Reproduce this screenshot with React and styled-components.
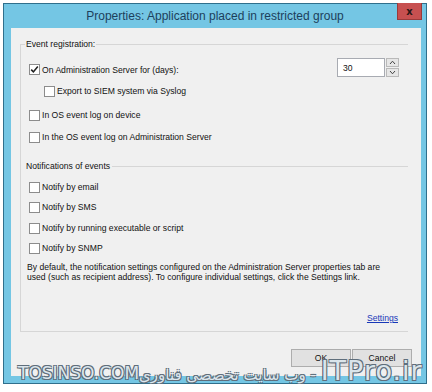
import React from "react";
import styled, { createGlobalStyle } from "styled-components";

const Global = createGlobalStyle`
  html, body { margin: 0; padding: 0; background: #ffffff; }
  body { font-family: "Liberation Sans", Arial, sans-serif; }
`;

const Window = styled.div`
  position: relative;
  margin: 3px 0 0 3px;
  width: 424px;
  height: 381px;
  box-sizing: border-box;
  border: 1px solid #2f6f8c;
  background: #74c6e4;
  display: flex;
  flex-direction: column;
  padding: 0 5px 7px 7px;
`;

const TitleBar = styled.div`
  height: 24px;
  flex: none;
  display: flex;
  align-items: center;
  justify-content: center;
  margin-left: -7px;
  margin-right: -5px;
  font-family: "Liberation Sans", Arial, sans-serif;
  font-size: 12px;
  color: #1d3f5c;
`;

const CloseButton = styled.div`
  position: absolute;
  top: -1px;
  right: 4px;
  width: 25px;
  height: 17px;
  box-sizing: border-box;
  background: #c75050;
  border: 1px solid #9a3a3a;
  border-top: none;
  display: flex;
  align-items: center;
  justify-content: center;
  font-family: "DejaVu Sans", sans-serif;
  font-weight: bold;
  font-size: 10px;
  color: #2a1616;
`;

const Client = styled.div`
  flex: 1;
  background: #f0f0f0;
  display: flex;
  flex-direction: column;
  padding: 11px 13px 0 9px;
  font-size: 8.6px;
  color: #111;
`;

const Frame = styled.fieldset`
  margin: 0;
  padding: 0 10px 8px 4px;
  min-inline-size: 0;
  border: 1px solid #d6d6d6;
  border-right: none;
  display: flex;
  flex-direction: column;
`;

const Legend = styled.legend`
  padding: 0 1px;
  line-height: 10px;
  font-size: 8.6px;
`;

const Header = styled.div`
  display: flex;
  align-items: center;
  height: 12px;
  margin-top: ${(p) => p.$mt || 0}px;
  margin-left: -4px;
  margin-right: -10px;
  gap: 2px;
  &::after {
    content: "";
    flex: 1;
    height: 1px;
    background: #d6d6d6;
  }
`;

const HeaderText = styled.span`
  padding-left: 5px;
`;

const Row = styled.div`
  display: flex;
  align-items: center;
  height: ${(p) => p.$h || 20}px;
  margin-top: ${(p) => p.$mt || 0}px;
  padding-left: ${(p) => p.$indent || 4}px;
`;

const CheckLabel = styled.label`
  display: flex;
  align-items: center;
  gap: 2px;
  margin-top: ${(p) => p.$mt || 0}px;
`;

const Box = styled.span`
  width: 11px;
  height: 11px;
  box-sizing: border-box;
  border: 1px solid #8c8c8c;
  background: #ffffff;
  display: flex;
  align-items: center;
  justify-content: center;
`;

const Spinner = styled.div`
  margin-left: auto;
  margin-right: -1px;
  display: flex;
  height: 19px;
`;

const SpinInput = styled.div`
  width: 48px;
  box-sizing: border-box;
  border: 1px solid #a8abb2;
  background: #fff;
  display: flex;
  align-items: center;
  padding-left: 5px;
`;

const SpinButtons = styled.div`
  width: 13px;
  margin-left: 1px;
  display: flex;
  flex-direction: column;
  gap: 1px;
`;

const SpinBtn = styled.div`
  flex: 1;
  background: #e6e6e6;
  border: 1px solid #b9b9b9;
  display: flex;
  align-items: center;
  justify-content: center;
`;

const Para = styled.p`
  margin: ${(p) => p.$mt || 0}px 0 0 2px;
  line-height: 10px;
  font-size: 8.6px;
`;

const LinkRow = styled.div`
  display: flex;
  justify-content: flex-end;
  margin-top: 31px;
  line-height: 10px;
`;

const Link = styled.a`
  color: #1838b8;
  text-decoration: underline;
`;

const ButtonRow = styled.div`
  display: flex;
  justify-content: flex-end;
  gap: 1px;
  margin-top: 17px;
  margin-right: -4px;
`;

const Button = styled.div`
  width: ${(p) => p.$w || 60}px;
  height: 18px;
  box-sizing: border-box;
  border: 1px solid #adadad;
  background: #e1e1e1;
  display: flex;
  align-items: center;
  justify-content: center;
  font-size: 8.6px;
`;

const Watermark = styled.div`
  position: absolute;
  left: 14px;
  right: 8px;
  bottom: -3px;
  display: flex;
  align-items: flex-end;
  justify-content: space-between;
  white-space: nowrap;
  pointer-events: none;
  color: rgba(236, 246, 252, 0.9);
  text-shadow: -1px -1px 0 #5f6e7b, 1px -1px 0 #5f6e7b, -1px 1px 0 #5f6e7b,
    1px 1px 0 #5f6e7b;
`;

const WmLeft = styled.span`
  flex: none;
  font-family: "DejaVu Sans", sans-serif;
  font-size: 17px;
  margin-bottom: 3px;
`;

const WmRight = styled.span`
  flex: none;
  direction: rtl;
  font-family: "DejaVu Sans", sans-serif;
  font-size: 15px;
  & b {
    font-family: "DejaVu Sans", sans-serif;
    font-weight: normal;
    font-size: 27px;
    letter-spacing: 1px;
  }
`;

const Check = ({ checked }) => (
  <Box>
    {checked && (
      <svg width="9" height="9" viewBox="0 0 9 9">
        <path d="M1.2 4.6 L3.4 6.9 L7.8 1.6" fill="none" stroke="#222" strokeWidth="1.6" />
      </svg>
    )}
  </Box>
);

const Item = ({ label, checked, mt }) => (
  <CheckLabel $mt={mt}>
    <Check checked={checked} />
    <span>{label}</span>
  </CheckLabel>
);

const Chevron = ({ up }) => (
  <svg width="7" height="5" viewBox="0 0 7 5">
    <path
      d={up ? "M1 4 L3.5 1.2 L6 4" : "M1 1 L3.5 3.8 L6 1"}
      fill="none"
      stroke="#444"
      strokeWidth="1"
    />
  </svg>
);

export default function App() {
  return (
    <>
      <Global />
      <Window>
        <TitleBar>Properties: Application placed in restricted group</TitleBar>
        <CloseButton>x</CloseButton>
        <Client>
          <Frame>
            <Legend>Event registration:</Legend>
            <Row $h={19} $mt={9}>
              <Item label="On Administration Server for (days):" checked mt={4} />
              <Spinner>
                <SpinInput>30</SpinInput>
                <SpinButtons>
                  <SpinBtn><Chevron up /></SpinBtn>
                  <SpinBtn><Chevron /></SpinBtn>
                </SpinButtons>
              </Spinner>
            </Row>
            <Row $mt={4} $indent={19}>
              <Item label="Export to SIEM system via Syslog" />
            </Row>
            <Row $mt={4}>
              <Item label="In OS event log on device" />
            </Row>
            <Row $mt={2}>
              <Item label="In the OS event log on Administration Server" />
            </Row>
            <Header $mt={13}>
              <HeaderText>Notifications of events</HeaderText>
            </Header>
            <Row $mt={5}>
              <Item label="Notify by email" />
            </Row>
            <Row>
              <Item label="Notify by SMS" />
            </Row>
            <Row $mt={1}>
              <Item label="Notify by running executable or script" />
            </Row>
            <Row>
              <Item label="Notify by SNMP" />
            </Row>
            <Para $mt={4}>
              By default, the notification settings configured on the Administration Server properties tab are
              used (such as recipient address). To configure individual settings, click the Settings link.
            </Para>
            <LinkRow>
              <Link>Settings</Link>
            </LinkRow>
          </Frame>
          <ButtonRow>
            <Button>OK</Button>
            <Button $w={60}>Cancel</Button>
          </ButtonRow>
        </Client>
        <Watermark>
          <WmLeft>TOSINSO.COM</WmLeft>
          <WmRight>
            <b>ITPro.ir</b> - وب سایت تخصصی فناوری
          </WmRight>
        </Watermark>
      </Window>
    </>
  );
}
